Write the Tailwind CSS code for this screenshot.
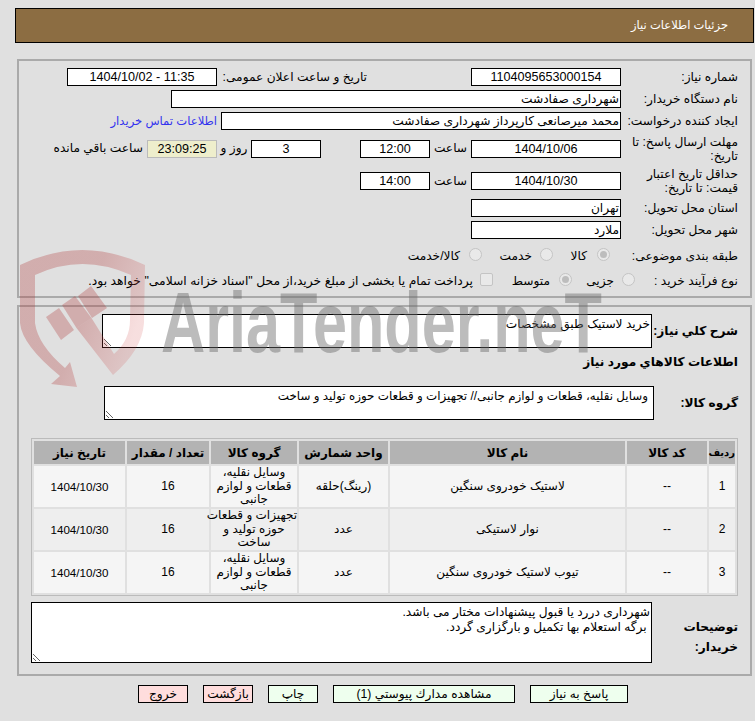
<!DOCTYPE html>
<html dir="rtl" lang="fa">
<head>
<meta charset="utf-8">
<title>جزئیات اطلاعات نیاز</title>
<script src="https://cdn.jsdelivr.net/npm/@tailwindcss/browser@4"></script>
</head>
<body class="relative w-[755px] h-[721px] overflow-hidden bg-[#e0e0e0] text-black text-[12.2px] font-['Liberation_Sans','DejaVu_Sans',sans-serif]">

<!-- header -->
<div class="mt-[8px] mr-px w-[739px] h-[35px] border border-black bg-[#8c6d42] flex items-center pr-[25px] text-white text-[11.5px]">جزئیات اطلاعات نیاز</div>

<!-- first panel -->
<div class="mt-[16px] mr-[3px] w-[735px] h-[239px] border-2 border-[#aaaaaa] pt-[5px] pr-[12px]">
  <div class="flex items-center h-[22px]">
    <div class="w-[117px] shrink-0">شماره نیاز:</div>
    <div class="w-[150px] h-[18px] border border-black bg-white text-center text-[12.6px] leading-[16px]">1104095653000154</div>
    <div class="w-[150px] mr-[104px]">تاریخ و ساعت اعلان عمومی:</div>
    <div dir="ltr" class="w-[150px] h-[18px] border border-black bg-white text-center text-[12.6px] leading-[16px]">1404/10/02 - 11:35</div>
  </div>
  <div class="flex items-center h-[22px]">
    <div class="w-[117px] shrink-0">نام دستگاه خریدار:</div>
    <div class="w-[450px] h-[18px] border border-black bg-white pr-px leading-[16px]">شهرداری صفادشت</div>
  </div>
  <div class="flex items-center h-[22px]">
    <div class="w-[117px] shrink-0">ایجاد کننده درخواست:</div>
    <div class="w-[400px] h-[18px] border border-black bg-white pr-px leading-[16px]">محمد میرصانعی کارپرداز شهرداری صفادشت</div>
    <a class="mr-[4px] text-[#3333ee] text-[11.6px]">اطلاعات تماس خریدار</a>
  </div>
  <div class="flex items-center h-[31px] mt-[1px]">
    <div class="w-[117px] shrink-0 leading-[14px]">مهلت ارسال پاسخ: تا تاریخ:</div>
    <div class="w-[150px] h-[18px] border border-black bg-white text-center text-[12.6px] leading-[16px]">1404/10/06</div>
    <div class="w-[41px] text-center">ساعت</div>
    <div class="w-[70px] h-[18px] border border-black bg-white text-center text-[12.6px] leading-[16px]">12:00</div>
    <div class="w-[70px] h-[18px] mr-[39px] border border-black bg-white text-center text-[12.6px] leading-[16px]">3</div>
    <div class="w-[34px] text-center">روز و</div>
    <div class="w-[70px] h-[18px] border border-[#bbbbbb] bg-[#eeeecc] text-center text-[12.6px] leading-[16px]">23:09:25</div>
    <div class="mr-[4px] whitespace-nowrap">ساعت باقي مانده</div>
  </div>
  <div class="flex items-center h-[32px] mt-[1px]">
    <div class="w-[117px] shrink-0 leading-[14px]">حداقل تاریخ اعتبار قیمت: تا تاریخ:</div>
    <div class="w-[150px] h-[18px] border border-black bg-white text-center text-[12.6px] leading-[16px]">1404/10/30</div>
    <div class="w-[41px] text-center">ساعت</div>
    <div class="w-[70px] h-[18px] border border-black bg-white text-center text-[12.6px] leading-[16px]">14:00</div>
  </div>
  <div class="flex items-center h-[22px]">
    <div class="w-[117px] shrink-0">استان محل تحویل:</div>
    <div class="w-[150px] h-[18px] border border-black bg-white pr-px leading-[16px]">تهران</div>
  </div>
  <div class="flex items-center h-[22px]">
    <div class="w-[117px] shrink-0">شهر محل تحویل:</div>
    <div class="w-[150px] h-[18px] border border-black bg-white pr-px leading-[16px]">ملارد</div>
  </div>
  <div class="flex items-center h-[30px]">
    <div class="w-[117px] shrink-0">طبقه بندی موضوعی:</div>
    <div class="mr-[11px] mb-[3px] w-[13px] h-[13px] rounded-full border border-[#c4c4c4] bg-[#e9e9e9] flex items-center justify-center"><span class="w-[7px] h-[7px] rounded-full bg-[#bdbdbd]"></span></div>
    <div class="mr-[10px] w-[34px]">کالا</div>
    <div class="mb-[3px] w-[13px] h-[13px] rounded-full border border-[#c4c4c4] bg-[#e9e9e9]"></div>
    <div class="mr-[8px] w-[50px]">خدمت</div>
    <div class="mb-[3px] w-[13px] h-[13px] rounded-full border border-[#c4c4c4] bg-[#e9e9e9]"></div>
    <div class="mr-[9px]">کالا/خدمت</div>
  </div>
  <div class="flex items-center h-[20px]">
    <div class="w-[103px] shrink-0">نوع فرآیند خرید :</div>
    <div class="mb-[3px] w-[13px] h-[13px] rounded-full border border-[#c4c4c4] bg-[#e9e9e9]"></div>
    <div class="mr-[8px] w-[42px]">جزیی</div>
    <div class="mb-[3px] w-[13px] h-[13px] rounded-full border border-[#c4c4c4] bg-[#e9e9e9] flex items-center justify-center"><span class="w-[7px] h-[7px] rounded-full bg-[#bdbdbd]"></span></div>
    <div class="mr-[9px] w-[57px]">متوسط</div>
    <div class="mb-[3px] w-[13px] h-[13px] rounded-[2px] border border-[#c4c4c4] bg-[#e9e9e9]"></div>
    <div class="mr-[7px] whitespace-nowrap text-[12.35px]">پرداخت تمام یا بخشی از مبلغ خرید،از محل "اسناد خزانه اسلامی" خواهد بود.</div>
  </div>
</div>

<!-- second panel -->
<div class="mt-[7px] mr-[3px] w-[735px] h-[371px] border-2 border-[#aaaaaa] pt-[7px] pr-[12px]">
  <div class="flex items-center">
    <div class="w-[86px] shrink-0 font-bold">شرح کلي نیاز:</div>
    <div class="w-[550px] h-[34px] border border-black bg-white resize overflow-hidden pr-px leading-[18px]">خرید لاستیک طبق مشخصات</div>
  </div>
  <div class="mt-[6px] h-[16px] font-bold leading-[16px]">اطلاعات کالاهاي مورد نیاز</div>
  <div class="flex items-center mt-[16px]">
    <div class="w-[84px] shrink-0 font-bold">گروه کالا:</div>
    <div class="w-[550px] h-[34px] border border-black bg-white resize overflow-hidden pr-[5px] leading-[18px] text-[11.9px]">وسایل نقلیه، قطعات و لوازم جانبی// تجهیزات و قطعات حوزه تولید و ساخت</div>
  </div>
  <table class="mt-[18px] w-[707px] table-fixed border-separate border-spacing-[2px] border border-[#bbbbbb] text-center text-[12px]">
    <thead>
      <tr class="h-[23px] bg-[#b3b3b3] font-bold">
        <th class="w-[26px] p-0 text-[10px]">ردیف</th>
        <th class="w-[80px] p-0">کد کالا</th>
        <th class="w-[235px] p-0">نام کالا</th>
        <th class="w-[89px] p-0">واحد شمارش</th>
        <th class="w-[86px] p-0">گروه کالا</th>
        <th class="w-[82px] p-0">تعداد / مقدار</th>
        <th class="w-[91px] p-0">تاریخ نیاز</th>
      </tr>
    </thead>
    <tbody class="leading-[13.5px]">
      <tr class="h-[41px] bg-[#f5f5f5]">
        <td>1</td><td>--</td><td>لاستیک خودروی سنگین</td><td>(رینگ)حلقه</td>
        <td class="whitespace-nowrap">وسایل نقلیه،<br>قطعات و لوازم<br>جانبی</td><td>16</td><td class="text-[11.6px]">1404/10/30</td>
      </tr>
      <tr class="h-[41px] bg-[#eeeeee]">
        <td>2</td><td>--</td><td>نوار لاستیکی</td><td>عدد</td>
        <td class="whitespace-nowrap">تجهیزات و قطعات<br>حوزه تولید و<br>ساخت</td><td>16</td><td class="text-[11.6px]">1404/10/30</td>
      </tr>
      <tr class="h-[41px] bg-[#f5f5f5]">
        <td>3</td><td>--</td><td>تیوب لاستیک خودروی سنگین</td><td>عدد</td>
        <td class="whitespace-nowrap">وسایل نقلیه،<br>قطعات و لوازم<br>جانبی</td><td>16</td><td class="text-[11.6px]">1404/10/30</td>
      </tr>
    </tbody>
  </table>
  <div class="flex items-start mt-[6px]">
    <div class="w-[86px] shrink-0 font-bold leading-[20px] pt-[15px]">توضیحات خریدار:</div>
    <div class="w-[621px] h-[61px] border border-black bg-white resize overflow-hidden pr-px leading-[15px] pt-[2px]">شهرداری دررد یا قبول پیشنهادات مختار می باشد.<br>&nbsp;برگه استعلام بها تکمیل و بارگزاری گردد.</div>
  </div>
</div>

<!-- buttons -->
<div class="mt-[9px] mr-[127px] flex gap-[15px]">
  <button class="w-[98px] h-[18px] border border-black bg-[#eeffee] leading-[16px]">پاسخ به نیاز</button>
  <button class="w-[182px] h-[18px] border border-black bg-[#eeffee] leading-[16px]">مشاهده مدارك پیوستي (1)</button>
  <button class="w-[50px] h-[18px] border border-black bg-[#eeffee] leading-[16px]">چاپ</button>
  <button class="w-[50px] h-[18px] border border-black bg-[#ffdddd] leading-[16px]">بازگشت</button>
  <button class="w-[50px] h-[18px] border border-black bg-[#ffdddd] leading-[16px]">خروج</button>
</div>

<!-- watermark over the page -->
<svg class="absolute inset-0 z-10 pointer-events-none" width="755" height="721" viewBox="0 0 755 721">
  <defs>
    <linearGradient id="wm" x1="0" y1="0" x2="1" y2="0.4">
      <stop offset="0.6" stop-color="#b03838" stop-opacity="0.3"/>
      <stop offset="1" stop-color="#d04040" stop-opacity="0.17"/>
    </linearGradient>
  </defs>
  <path fill="url(#wm)" d="M20 265 Q82 235 145 265 L144 323 Q142 350 113 375 L76.500 328 L91.500 318 L114 354 Q130 340 130 320 L131 275 Q82 253 35 275 L35 323 Q38 345 65 368 L70 362 L77 387 L51 384 L60 376 Q22 345 20 323 Z"/>
  <path fill="#b03838" fill-opacity="0.3" d="M46 317 L59 308 L74 330 L61 340 Z M62 305 L75 296 L91.500 318 L76.500 328 Z M78 296 L91 286 L107 308 L92 318 Z"/>
  <text x="161" y="352" textLength="441" lengthAdjust="spacingAndGlyphs" font-size="86" font-weight="700" fill="#6a6a6a" fill-opacity="0.45" direction="ltr" unicode-bidi="bidi-override" class="font-['Liberation_Sans',sans-serif]">AriaTender.neT</text>
</svg>
</body>
</html>
